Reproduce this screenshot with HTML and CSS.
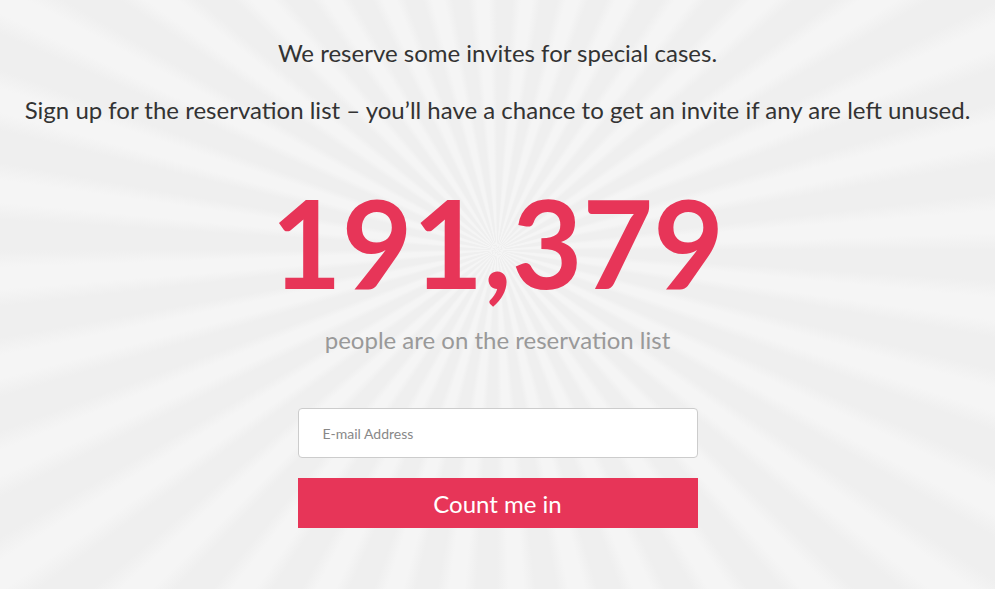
FILE: index.html
```html
<!DOCTYPE html>
<html lang="en">
<head>
  <meta charset="UTF-8" />
  <meta name="viewport" content="width=device-width, initial-scale=1" />
  <title>Reservation list</title>
  <link rel="stylesheet" href="styles.css">
</head>
<body>
  <div class="page">
    <div class="intro">
      <p>We reserve some invites for special cases.</p>
      <p>Sign up for the reservation list &ndash; you&rsquo;ll have a chance to get an invite if any are left unused.</p>
    </div>
    <div class="counter">
      <div class="count">191,379</div>
      <div class="count-label">people are on the reservation list</div>
    </div>
    <form class="signup" onsubmit="return false;">
      <input type="email" class="email" placeholder="E-mail Address" />
      <button type="submit">Count me in</button>
    </form>
  </div>
</body>
</html>
```

FILE: styles.css
```css
html, body {
  height: 100%;
}
body {
  margin: 0;
  font-family: Lato, 'Open Sans', sans-serif;
  color: #333;
  background-color: #efefef;
  background-image: repeating-conic-gradient(from 0deg at 497px 250px,
    #efefef 0deg, #efefef 3.5deg, #f5f5f5 5.5deg, #f5f5f5 8deg, #efefef 10deg);
  overflow: hidden;
}
.page {
  display: flex;
  flex-direction: column;
  align-items: center;
  padding-top: 37px;
}
.intro {
  text-align: center;
  font-size: 24px;
  line-height: 32px;
}
.intro p {
  margin: 0 0 25px;
}
.counter {
  text-align: center;
  margin-top: 30px;
}
.count {
  font-size: 122px;
  font-weight: 700;
  line-height: 122px;
  color: #e73558;
}
.count-label {
  font-size: 24px;
  color: #999;
  margin-top: 22px;
}
.signup {
  display: flex;
  flex-direction: column;
  width: 400px;
  margin-top: 54px;
  gap: 20px;
}
.email {
  box-sizing: border-box;
  height: 50px;
  border: 1px solid #ccc;
  border-radius: 4px;
  background: #fff;
  padding: 0 24px;
  font-family: Lato, sans-serif;
  font-size: 14px;
  color: #333;
}
.email::placeholder {
  color: #888;
}
button {
  height: 50px;
  border: none;
  background: #e73558;
  color: #fff;
  font-family: Lato, sans-serif;
  font-size: 24px;
  cursor: pointer;
}
```
